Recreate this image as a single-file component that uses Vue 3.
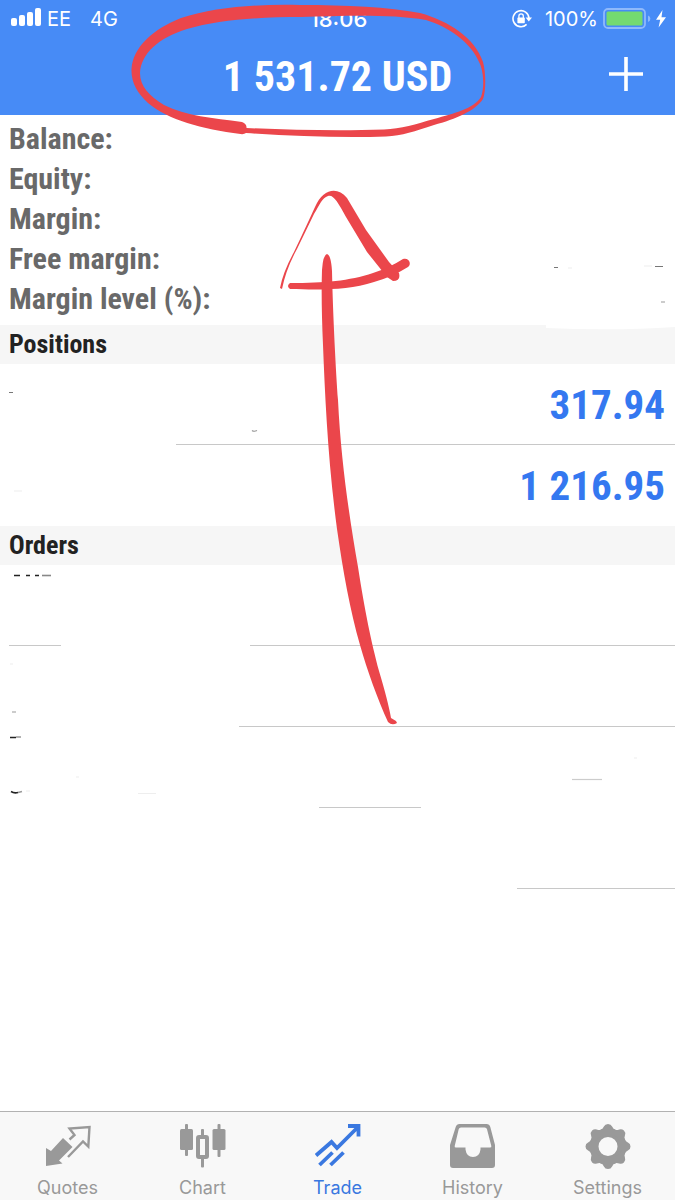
<script setup>
const account = ['Balance:', 'Equity:', 'Margin:', 'Free margin:', 'Margin level (%):']

const positions = [
  { profit: '317.94', rules: [{ start: 26, end: 100 }] },
  { profit: '1 216.95', rules: [] },
]

const orders = [
  { rules: [{ start: 1.3, end: 9 }, { start: 37, end: 100 }] },
  { rules: [{ start: 35.4, end: 100 }] },
  { rules: [{ start: 47.2, end: 62.4 }] },
  { rules: [{ start: 76.6, end: 100 }] },
]

const tabs = ['Quotes', 'Chart', 'Trade', 'History', 'Settings']

const ruleStyle = (r) => ({ left: `${r.start}%`, right: `${100 - r.end}%` })
</script>

<template>
  <div class="app">
    <header class="top">
      <div class="status">
        <div class="status-side">
          <svg class="signal" viewBox="0 0 31 19" aria-hidden="true">
            <rect x="0" y="10" width="6" height="8" rx="2" />
            <rect x="8" y="7" width="6" height="11" rx="2" />
            <rect x="16" y="4" width="6" height="14" rx="2" />
            <rect x="24" y="0" width="6" height="18" rx="2" />
          </svg>
          <span>EE</span>
          <span class="network">4G</span>
        </div>
        <time class="clock">18:06</time>
        <div class="status-side status-right">
          <svg class="lock" viewBox="0 0 20 20" aria-hidden="true">
            <path d="M14.6 15.4A8 8 0 1 1 17 9.2" fill="none" stroke="#fff" stroke-width="1.6" />
            <path d="M13.6 8.6h6.4l-3.2 4z" fill="#fff" />
            <rect x="5.4" y="8.6" width="7.4" height="5.6" rx="0.8" fill="#fff" />
            <path d="M6.9 9V7a2.2 2.2 0 0 1 4.4 0v2" fill="none" stroke="#fff" stroke-width="1.3" />
          </svg>
          <span>100%</span>
          <svg class="battery" viewBox="0 0 48 22" aria-hidden="true">
            <rect x="1" y="1" width="41" height="19" rx="4" fill="none" stroke="#8fb9fb" stroke-width="1.8" />
            <rect x="3.5" y="3.5" width="36" height="14" rx="1.5" fill="#74da70" />
            <path d="M45 7.5q2.4 .8 2.4 3.2t-2.4 3.2z" fill="#8fb9fb" />
          </svg>
          <svg class="bolt" viewBox="0 0 10 18" aria-hidden="true">
            <path d="M6.5 0 0 9.8h4.2L2.6 17.6 10 7.2H5.5z" fill="#fff" />
          </svg>
        </div>
      </div>
      <div class="bar">
        <h1>1 531.72 USD</h1>
        <button class="add" type="button" aria-label="New order">
          <svg viewBox="0 0 34 34" aria-hidden="true"><path d="M17 0v34M0 17h34" stroke="#fff" stroke-width="3.6" /></svg>
        </button>
      </div>
    </header>

    <main>
      <ul class="account">
        <li v-for="label in account" :key="label">{{ label }}</li>
      </ul>
      <h2>Positions</h2>
      <ul>
        <li v-for="p in positions" :key="p.profit" class="row">
          <span class="profit">{{ p.profit }}</span>
          <i v-for="r in p.rules" :key="r.start" class="rule" :style="ruleStyle(r)"></i>
        </li>
      </ul>
      <h2>Orders</h2>
      <ul>
        <li v-for="(o, n) in orders" :key="n" class="row">
          <i v-for="r in o.rules" :key="r.start" class="rule" :style="ruleStyle(r)"></i>
        </li>
      </ul>
    </main>

    <nav class="tabs">
      <a v-for="tab in tabs" :key="tab" href="#" :class="{ active: tab === 'Trade' }">
        <svg viewBox="0 0 46 46" aria-hidden="true">
          <g v-if="tab === 'Quotes'">
            <path d="M18 14 27.500 23 14 36.500 17.500 39.500 1 42V24L6 27z" fill="currentColor" />
            <path d="M24.500 15.500 29.500 11 24.500 4.500 44.500 3 43.300 22.500 38 17.500 23 33" fill="none" stroke="currentColor" stroke-width="2.4" />
          </g>
          <g v-else-if="tab === 'Chart'" fill="currentColor">
            <rect x="0" y="5" width="13" height="21" rx="1.5" />
            <rect x="5" y="0" width="3" height="32" rx="1" />
            <rect x="32.5" y="5" width="13" height="21" rx="1.5" />
            <rect x="37.5" y="0" width="3" height="33" rx="1" />
            <rect x="21" y="5" width="3" height="7" rx="1" />
            <rect x="21" y="34" width="3" height="9.5" rx="1" />
            <rect x="18" y="13" width="9" height="20" rx="1" fill="none" stroke="currentColor" stroke-width="4" />
          </g>
          <g v-else-if="tab === 'Trade'" fill="none" stroke="currentColor" stroke-width="3.8">
            <path d="M1 31.500 16.500 18 22 24 42.500 3.500M33 2h10.500v10.500M4.500 41 17.500 28.500M15.500 41 28.500 28.500" />
          </g>
          <g v-else-if="tab === 'History'">
            <path fill-rule="evenodd" d="M9.500 0h27q3 0 3.800 3l4.700 18v20q0 3-3 3H3q-3 0-3-3V21L5.700 3Q6.600 0 9.500 0zM11 3.500q-1.800 0-2.300 1.800L4.700 22q-.4 1.500 1.300 1.500h9.500v2q1 7.500 7.500 7.500t7.500-7.500v-2H40q1.700 0 1.300-1.500L37 5.300q-.5-1.800-2.300-1.800z" fill="currentColor" />
          </g>
          <g v-else fill="currentColor">
            <path fill-rule="evenodd" d="M23 4a18.500 18.500 0 1 0 0 37 18.500 18.500 0 0 0 0-37zM23 13a9.500 9.500 0 1 1 0 19 9.500 9.500 0 0 1 0-19z" />
            <path v-for="n in 8" :key="n" d="M15.500 6q2.300-.8 3.400-3.400Q20 0 23 0t4.100 2.600Q28.200 5.200 30.500 6v4h-15z" :transform="`rotate(${n * 45} 23 22.5)`" />
          </g>
        </svg>
        <span>{{ tab }}</span>
      </a>
    </nav>

    <svg class="marks" viewBox="0 0 675 1200" aria-hidden="true">
      <path d="M546 320h129v7q-60 4-129 1z" fill="#fff" />
      <path d="M0 520h275q-60 6-150 6H0z" fill="#fff" />
      <g fill="none" stroke="#999" stroke-width="1.200">
        <path d="M554 267.500h4M655 266.500h8M9 392.500h4" stroke="#777" />
        <path d="M661 302h4M252 430.500q2 1.500 5 0M12 712h4" />
        <path d="M572 779.500h30" stroke="#ccc" />
        <path d="M644 266h8M568 268h4M76 777h3M138 793.500h18M26 791h4M10 664h3M14 491h8M634 758h3" stroke="#eee" />
      </g>
      <g fill="none" stroke="#222" stroke-width="1.600">
        <path d="M14 575.500h6M26 575.500h4M35 575.500h4" />
        <path d="M42 575.500h9" stroke="#888" />
        <path d="M10 737.500h6M11 791.500q3 2 7 1" />
        <path d="M16 737h5M18 792.500l4-1" stroke="#999" />
      </g>
      <g fill="#eb464b">
        <path d="M240.500 134C202 129 168 120 148 103 137 93 131 82 131.500 69 133 47 153 29 181 18 215 7 257 4 300 5 347 5 388 7 420 13 449 21 475 38 483 62 486 73 486 91 483 99 475 111 456 119 434 125 415 131 402 136 386 136.500 341 138 292 136 246 133Q244 134.500 240.500 134ZM242 122Q247 124 246.500 128C292 130 341 131 384 129.500 401 129 416 124 434 119 455 113 473 109 481 97 485 86 483 71 480 64 471 42 449 27 426 20 390 14 345 16 301 17 257 17 218 20 187 29 158 38 141 54 140 73 140 86 149 96 164 105 186 116 213 118 242 122Z" fill-rule="evenodd" />
        <path d="M280 288Q283 272 294 252C303 233 310 218 315 207 323 189 337 186 347 198L366 230 389 262 399 273Q401 281 393 281L387 277 367 252 346 217C338 202 333 194 328 196 322 198 320 204 314 214L297 249Q286 269 282 289Z" />
        <path d="M290 283C325 283 349 281 373 273Q389 268 403 259C409 257 412 264 408 267Q392 277 374 282C349 290 323 290 290 289Q286 286 290 283Z" />
        <path d="M322 270Q323 255 327 254Q331 255 332 271C333 318 336 372 338 400 341 463 350 521 358 567 365 612 371 641 379 671Q388 701 391 718L396 721 397 723Q392 726 388 722C378 700 367 670 360 645 350 610 343 571 337 529 328 461 325 397 323 345Q321 300 322 270Z" />
      </g>
    </svg>
  </div>
</template>

<style>
body { margin: 0; }
</style>

<style scoped>
.app {
  position: relative;
  display: flex;
  flex-direction: column;
  min-height: 100vh;
  overflow: hidden;
  background: #fff;
  font-family: Inter, "Liberation Sans", sans-serif;
}
.top {
  box-sizing: border-box;
  height: 115px;
  color: #fff;
  background: #478bf6;
}
.status {
  display: grid;
  grid-template-columns: 1fr auto 1fr;
  align-items: center;
  height: 38px;
  padding: 0 9px 0 11px;
  font-size: 20px;
}
.status-side { display: flex; align-items: center; }
.status-right { justify-content: flex-end; }
.signal { width: 31px; height: 19px; margin: 0 5px 4px 0; fill: #fff; }
.network { margin-left: 19px; }
.clock { font-size: 22px; font-weight: 500; line-height: 36px; }
.lock { width: 20px; height: 20px; margin-right: 13px; }
.battery { width: 48px; height: 22px; margin: 0 5px; }
.bolt { width: 10px; height: 18px; }
.bar {
  display: grid;
  grid-template-columns: 1fr auto 1fr;
  align-items: center;
  height: 77px;
  padding: 0 32px;
}
h1, h2, .account, .profit {
  font-family: "Liberation Sans Narrow", "Roboto Condensed", "Liberation Sans", sans-serif;
  font-weight: 700;
}
h1 { grid-column: 2; margin: 0; font-size: 42px; line-height: 77px; }
.add {
  justify-self: end;
  width: 34px;
  height: 34px;
  margin-bottom: 6px;
  padding: 0;
  border: 0;
  background: none;
}
.add svg { display: block; width: 34px; height: 34px; }
main { flex: 1; }
ul { margin: 0; padding: 0; list-style: none; }
.account {
  padding: 4px 9px 6px;
  font-size: 30px;
  line-height: 40px;
  color: #696969;
}
h2 {
  margin: 0;
  padding: 0 9px;
  font-size: 26px;
  line-height: 39px;
  color: #222;
  background: #f6f6f6;
}
.row {
  position: relative;
  display: flex;
  align-items: center;
  justify-content: flex-end;
  height: 81px;
  padding: 0 10px;
}
.rule { position: absolute; bottom: 0; height: 1px; background: #c8c8c8; }
.profit { font-size: 41px; line-height: 80px; color: #3478f0; }
.tabs {
  display: grid;
  grid-template-columns: repeat(5, 1fr);
  box-sizing: border-box;
  height: 89px;
  border-top: 1px solid #b2b2b2;
  background: #f8f8f8;
}
.tabs a {
  display: flex;
  flex-direction: column;
  align-items: center;
  padding-top: 12px;
  font-size: 18px;
  line-height: 24px;
  color: #999;
  text-decoration: none;
}
.tabs a svg { width: 46px; height: 46px; margin-bottom: 6px; }
.tabs a.active { color: #3a78e0; }
.marks { position: absolute; top: 0; left: 0; width: 100%; pointer-events: none; }
</style>
